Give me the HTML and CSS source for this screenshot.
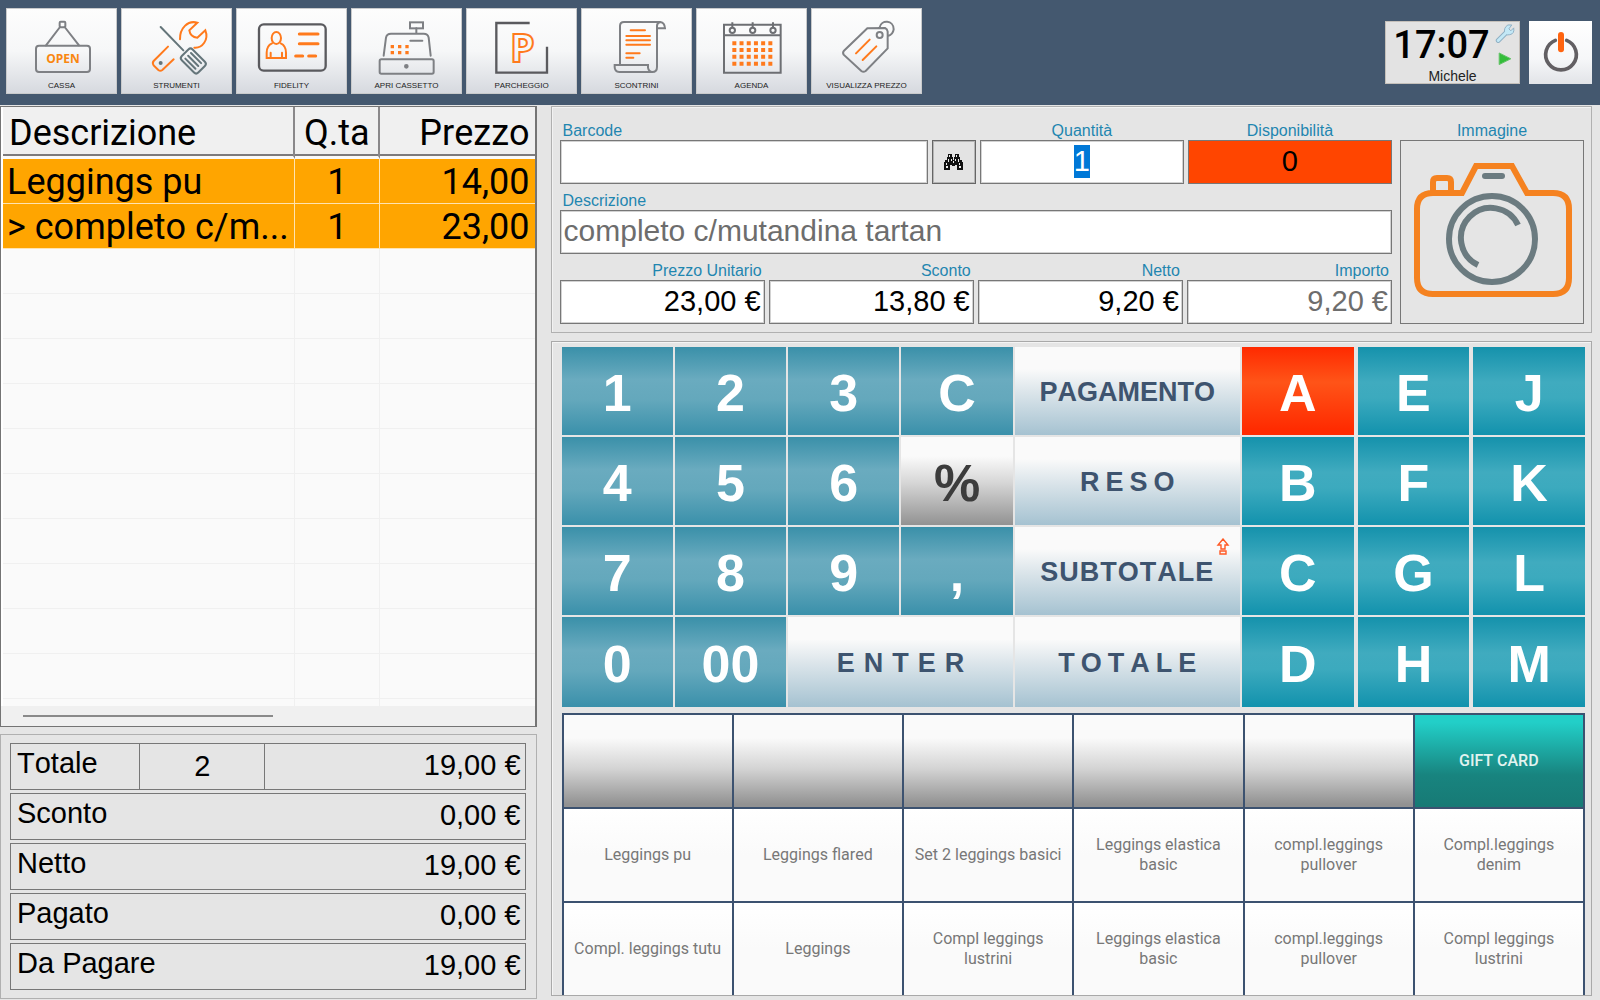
FILE: index.html
```html
<!DOCTYPE html>
<html lang="it">
<head>
<meta charset="utf-8">
<meta name="viewport" content="width=device-width, initial-scale=1">
<title>Cassa</title>
<link rel="stylesheet" href="styles.css">
</head>
<body>
<header class="topbar">
  <nav class="tools" aria-label="Funzioni">
    <button class="tool" type="button">
      <svg class="tool-icon" viewBox="0 0 333 210" aria-hidden="true">
        <g class="line"><rect x="161" y="38" width="17" height="17" rx="3"/><path d="M162 54 L120 109 M176 54 L219 109"/><rect x="90" y="110" width="162" height="79" rx="9"/></g>
        <text class="open-text" x="171" y="163">OPEN</text>
      </svg>
      <span>CASSA</span>
    </button>
    <button class="tool" type="button">
      <svg class="tool-icon" viewBox="0 0 333 210" aria-hidden="true">
        <g class="accent"><path d="M177 91 C176 58 200 33 229 41 L205 64 Q208 84 229 86 L253 64 C264 92 244 118 220 116"/><path d="M141 113 L98 156 Q93 162 98 169 L112 183 Q118 188 124 183 L158 151"/></g>
        <g class="teal"><path d="M119 54 L187 124" stroke-width="6"/><g transform="rotate(45 217 156)"><rect x="182" y="133" width="70" height="46" rx="9"/><path d="M195 144 H238 M195 156 H238 M195 168 H238"/></g><circle cx="119" cy="162" r="3"/></g>
      </svg>
      <span>STRUMENTI</span>
    </button>
    <button class="tool" type="button">
      <svg class="tool-icon" viewBox="0 0 333 210" aria-hidden="true">
        <rect class="dark" x="69" y="46" width="200" height="139" rx="14"/>
        <g class="accent"><ellipse cx="121" cy="87" rx="14" ry="18"/><path d="M108 103 Q92 110 92 131 V147 H150 V131 Q150 110 134 103 M104 147 V131 M138 147 V131"/><path stroke-width="9" d="M190 75 H246 M190 104 H246 M179 141 H200 M218 141 H239"/></g>
      </svg>
      <span>FIDELITY</span>
    </button>
    <button class="tool" type="button">
      <svg class="tool-icon" viewBox="0 0 333 210" aria-hidden="true">
        <g class="line"><rect x="177" y="40" width="39" height="18"/><path d="M196 58 V73 M98 140 L105 86 Q107 74 120 74 H218 Q231 74 233 86 L239 140 M178 95 H214"/><rect x="86" y="151" width="162" height="43" rx="5"/><circle cx="166" cy="172" r="4" fill="currentColor"/></g>
        <path class="dots" d="M119 108h10v10h-10z m22 0h10v10h-10z m22 0h10v10h-10z M119 126h10v10h-10z m22 0h10v10h-10z m22 0h10v10h-10z"/>
      </svg>
      <span>APRI CASSETTO</span>
    </button>
    <button class="tool" type="button">
      <svg class="tool-icon" viewBox="0 0 333 210" aria-hidden="true">
        <path class="dark" d="M191 42 H91 V191 H243 V113"/>
        <text class="parking-text" x="132" y="160">P</text>
      </svg>
      <span>PARCHEGGIO</span>
    </button>
    <button class="tool" type="button">
      <svg class="tool-icon" viewBox="0 0 333 210" aria-hidden="true">
        <path class="line" d="M117 167 V51 Q117 39 129 39 H238 Q251 41 252 58 H228 V51 Q228 41 238 39 M228 56 V174 Q228 189 214 189 M101 168 H201 V176 Q203 188 214 189 H115 Q101 188 101 174 Z"/>
        <path class="accent" d="M149 64 H192 M136 81 H207 M136 94 H207 M136 107 H207 M136 133 H176 M136 146 H157"/>
      </svg>
      <span>SCONTRINI</span>
    </button>
    <button class="tool" type="button">
      <svg class="tool-icon" viewBox="0 0 333 210" aria-hidden="true">
        <g class="line calendar"><path d="M84 47 H254 V191 H84 Z M84 79 H254 M109 40 V56 M170 40 V56 M231 40 V56"/><circle cx="109" cy="64" r="8"/><circle cx="170" cy="64" r="8"/><circle cx="231" cy="64" r="8"/></g>
        <path class="day-rows" d="M109 103 H229 M109 123 H229 M109 143 H229 M109 164 H229"/>
      </svg>
      <span>AGENDA</span>
    </button>
    <button class="tool" type="button">
      <svg class="tool-icon" viewBox="0 0 333 210" aria-hidden="true">
        <path class="line" d="M169 58 L222 57 Q229 60 230 68 L230 118 L164 186 Q157 191 151 186 L98 137 Q94 131 99 125 Z M206 55 C210 32 248 32 248 61 Q246 76 231 81"/>
        <circle class="line" cx="206" cy="78" r="9"/>
        <path class="accent" d="M135 133 L176 92 M155 153 L196 112"/>
      </svg>
      <span>VISUALIZZA PREZZO</span>
    </button>
  </nav>
  <div class="session">
    <div class="clock">
      <time class="clock-time">17:07</time>
      <div class="clock-icons">
        <svg width="20" height="20" viewBox="0 0 20 20" aria-hidden="true"><path d="M3 17 L11 9" stroke="#8fb0c4" stroke-width="5" stroke-linecap="round"/><path d="M10 10 Q8 4 13 1 L17 1 L14 5 L16 7 L19 4 Q20 10 15 11 Q12 12 10 10Z" fill="#c3e8f6" stroke="#8fb0c4"/><path d="M3 17 L12 8" stroke="#c3e8f6" stroke-width="3" stroke-linecap="round"/></svg>
        <svg width="14" height="14" viewBox="0 0 14 14" aria-hidden="true"><path d="M1 1 L13 7 L1 13Z" fill="#34bd3a" stroke="#63c267"/></svg>
      </div>
      <span class="clock-user">Michele</span>
    </div>
    <button class="power" type="button" aria-label="Esci">
      <svg viewBox="0 0 189 189" aria-hidden="true"><path d="M79 58 A46 46 0 1 0 113 58" fill="none" stroke="#625f63" stroke-width="11" stroke-linecap="round"/><path d="M96 42 V85" stroke="#ff6410" stroke-width="18" stroke-linecap="round"/></svg>
    </button>
  </div>
</header>

<main class="workspace">
  <div class="receipt">
    <section class="lines-panel" aria-label="Righe scontrino">
      <div class="lines-view">
        <table class="lines">
          <colgroup><col class="col-name"><col class="col-qty"><col class="col-price"></colgroup>
          <thead><tr><th scope="col">Descrizione</th><th scope="col">Q.ta</th><th scope="col">Prezzo</th></tr></thead>
          <tbody>
            <tr class="sold"><td>Leggings pu</td><td>1</td><td>14,00</td></tr>
            <tr class="sold"><td>&gt; completo c/m...</td><td>1</td><td>23,00</td></tr>
            <tr><td></td><td></td><td></td></tr>
            <tr><td></td><td></td><td></td></tr>
            <tr><td></td><td></td><td></td></tr>
            <tr><td></td><td></td><td></td></tr>
            <tr><td></td><td></td><td></td></tr>
            <tr><td></td><td></td><td></td></tr>
            <tr><td></td><td></td><td></td></tr>
            <tr><td></td><td></td><td></td></tr>
            <tr><td></td><td></td><td></td></tr>
            <tr><td></td><td></td><td></td></tr>
            <tr><td></td><td></td><td></td></tr>
          </tbody>
        </table>
      </div>
      <div class="scrollbar"><div class="scroll-thumb"></div></div>
    </section>
    <section class="totals" aria-label="Totali">
      <div class="total-row total-split"><span class="total-label">Totale</span><span class="total-count">2</span><span class="total-value">19,00 €</span></div>
      <div class="total-row"><span class="total-label">Sconto</span><span class="total-value">0,00 €</span></div>
      <div class="total-row"><span class="total-label">Netto</span><span class="total-value">19,00 €</span></div>
      <div class="total-row"><span class="total-label">Pagato</span><span class="total-value">0,00 €</span></div>
      <div class="total-row"><span class="total-label">Da Pagare</span><span class="total-value">19,00 €</span></div>
    </section>
  </div>

  <div class="register">
    <form class="item-form">
      <div class="fields">
        <div class="field-row field-row-code">
          <div class="field"><label for="barcode">Barcode</label><input id="barcode" type="text"></div>
          <button class="search" type="button" aria-label="Cerca">
            <svg width="19" height="16" viewBox="0 0 19 16" aria-hidden="true"><path fill="#111" d="M4 0h4v3h1v3h1V3h1V0h4v3h1v3h2v2h1v8h-6v-5h-2v1H8v-1H6v5H0V8h1V6h2V3h1z"/><path fill="#eee" d="M5 1h1v2H5z M12 1h1v2h-1z M4 5h1v3H4z M14 5h1v3h-1z M2 9h1v2H2z M15 9h1v2h-1z M2 12h2v2H2z M15 12h2v2h-2z M9 7h1v2H9z M7 5h1v2H7z M11 5h1v2h-1z"/></svg>
          </button>
          <div class="field centered"><label for="qty">Quantità</label><input id="qty" type="text" value="1"></div>
          <div class="field centered"><label for="stock">Disponibilità</label><input id="stock" class="out-of-stock" type="text" value="0" readonly></div>
        </div>
        <div class="field description"><label for="name">Descrizione</label><input id="name" class="muted" type="text" value="completo c/mutandina tartan" readonly></div>
        <div class="field-row field-row-prices">
          <div class="field amount"><label for="unit">Prezzo Unitario</label><input id="unit" type="text" value="23,00 €"></div>
          <div class="field amount"><label for="discount">Sconto</label><input id="discount" type="text" value="13,80 €"></div>
          <div class="field amount"><label for="net">Netto</label><input id="net" type="text" value="9,20 €"></div>
          <div class="field amount"><label for="total">Importo</label><input id="total" class="muted" type="text" value="9,20 €" readonly></div>
        </div>
      </div>
      <div class="photo">
        <span class="photo-label" id="photo-label">Immagine</span>
        <button class="photo-box" type="button" aria-labelledby="photo-label">
          <svg viewBox="0 0 182 182" aria-hidden="true">
            <g fill="none" stroke="#f58220" stroke-width="6"><path d="M29 52 H61 L75 25 H111 L126 52 H152 Q168 52 168 68 V137 Q168 153 152 153 H32 Q16 153 16 137 V68 Q16 52 32 52"/><path d="M32 52 V41 Q32 37 36 37 H46 Q50 37 50 41 V52"/></g>
            <g fill="none" stroke="#6b7b80" stroke-width="6"><circle cx="91" cy="98" r="43"/><path d="M117 84 A30 30 0 1 0 77 124"/><path d="M84 35 H101" stroke-linecap="round"/></g>
          </svg>
        </button>
      </div>
    </form>

    <section class="pad" aria-label="Tastiera">
      <div class="keypad">
        <div class="keys numbers">
          <button class="key" type="button">1</button><button class="key" type="button">2</button><button class="key" type="button">3</button><button class="key" type="button">C</button>
          <button class="key" type="button">4</button><button class="key" type="button">5</button><button class="key" type="button">6</button><button class="key key-percent" type="button">%</button>
          <button class="key" type="button">7</button><button class="key" type="button">8</button><button class="key" type="button">9</button><button class="key" type="button">,</button>
          <button class="key" type="button">0</button><button class="key" type="button">00</button><button class="key key-action key-enter" type="button">ENTER</button>
        </div>
        <div class="keys actions">
          <button class="key key-action" type="button">PAGAMENTO</button>
          <button class="key key-action spaced" type="button">RESO</button>
          <button class="key key-action key-subtotal" type="button">SUBTOTALE
            <svg class="shift" width="14" height="17" viewBox="0 0 14 17" aria-hidden="true"><path d="M7 1 L12 7 H9 V11 H5 V7 H2 Z M4 13 H10 V16 H4 Z" fill="none" stroke="#ff5a26" stroke-width="1.4"/></svg>
          </button>
          <button class="key key-action spaced" type="button">TOTALE</button>
        </div>
        <div class="keys letters">
          <button class="key key-active" type="button">A</button><button class="key" type="button">E</button><button class="key" type="button">J</button>
          <button class="key" type="button">B</button><button class="key" type="button">F</button><button class="key" type="button">K</button>
          <button class="key" type="button">C</button><button class="key" type="button">G</button><button class="key" type="button">L</button>
          <button class="key" type="button">D</button><button class="key" type="button">H</button><button class="key" type="button">M</button>
        </div>
      </div>
      <div class="products">
        <button class="product product-empty" type="button" aria-label="Vuoto"></button>
        <button class="product product-empty" type="button" aria-label="Vuoto"></button>
        <button class="product product-empty" type="button" aria-label="Vuoto"></button>
        <button class="product product-empty" type="button" aria-label="Vuoto"></button>
        <button class="product product-empty" type="button" aria-label="Vuoto"></button>
        <button class="product product-gift" type="button">GIFT CARD</button>
        <button class="product" type="button">Leggings pu</button>
        <button class="product" type="button">Leggings flared</button>
        <button class="product" type="button">Set 2 leggings basici</button>
        <button class="product" type="button">Leggings elastica basic</button>
        <button class="product" type="button">compl.leggings pullover</button>
        <button class="product" type="button">Compl.leggings denim</button>
        <button class="product" type="button">Compl. leggings tutu</button>
        <button class="product" type="button">Leggings</button>
        <button class="product" type="button">Compl leggings lustrini</button>
        <button class="product" type="button">Leggings elastica basic</button>
        <button class="product" type="button">compl.leggings pullover</button>
        <button class="product" type="button">Compl leggings lustrini</button>
      </div>
    </section>
  </div>
</main>
<script src="script.js"></script>
</body>
</html>
```
FILE: styles.css
```css
* { box-sizing: border-box; }

body {
  margin: 0;
  background: #e5e5e5;
  color: #000;
  font-family: "Liberation Sans", Arial, sans-serif;
  font-kerning: none;
}

button, input { font: inherit; font-kerning: none; color: inherit; margin: 0; border-radius: 0; }
button { border: 0; padding: 0; cursor: pointer; }

/* Top bar */
.topbar {
  display: flex;
  justify-content: space-between;
  padding: 8px 8px 11px 6px;
  background: #44586f;
}
.tools { display: flex; gap: 4px; }
.tool {
  display: flex;
  flex-direction: column;
  width: 111px;
  height: 86px;
  border: 1px solid #c9cacb;
  background: linear-gradient(#fdfdfd 0%, #f6f7f8 50%, #d6d9df 100%);
  align-items: center;
  color: #222;
  font-size: 8px;
  line-height: 14px;
}
.tool-icon { width: 111px; height: 70px; flex: none; }
.line, .accent, .dark, .teal { fill: none; stroke-width: 6; stroke-linecap: round; }
.line { stroke: #7e8084; color: #7e8084; }
.calendar { stroke: #6d6f73; stroke-linecap: butt; }
.accent { stroke: #ff7a1c; }
.dark { stroke: #5a5a5e; stroke-width: 7; stroke-linecap: butt; }
.teal { stroke: #64757a; }
.dots { fill: #ff7a1c; }
.day-rows { stroke: #ff7a1c; stroke-width: 12; stroke-dasharray: 12 9.6; }
.open-text { fill: #f98710; font: bold 36px "Open Sans", sans-serif; text-anchor: middle; }
.parking-text { fill: none; stroke: #ff7a1c; stroke-width: 6; font: bold 118px "Open Sans", sans-serif; }

.session { display: flex; align-items: flex-start; gap: 9px; padding-top: 13px; }
.clock {
  display: grid;
  grid-template: 44px 1fr / 1fr 28px;
  width: 135px;
  height: 63px;
  border: 1px solid #c5c0ba;
  background: #e3e3e3;
}
.clock-time {
  padding-left: 6px;
  font: 500 38px/46px Roboto, sans-serif;
  text-align: center;
  white-space: nowrap;
}
.clock-icons { display: flex; flex-direction: column; align-items: center; gap: 9px; padding-top: 2px; }
.clock-user { grid-column: 1 / -1; text-align: center; font-size: 14px; line-height: 20px; color: #222; }
.power { width: 63px; height: 63px; background: linear-gradient(#fff, #f6f7f9 60%, #e2e4e8); }
.power svg { display: block; width: 63px; height: 63px; }

/* Page columns */
.workspace {
  display: grid;
  grid-template-columns: minmax(0, 34fr) minmax(0, 66fr);
  gap: 14px;
  padding: 1px 8px 0 0;
}

/* Receipt lines */
.lines-panel { border: 1px solid #747474; border-right-width: 2px; background: #fff; }
.lines-view { height: 599px; padding-left: 2px; overflow: hidden; }
.lines {
  width: 100%;
  table-layout: fixed;
  border-collapse: separate;
  border-spacing: 0;
  font-family: Roboto, sans-serif;
  font-size: 36px;
  line-height: 42px;
}
.col-name { width: 55%; }
.col-qty { width: 16%; }
.col-price { width: 29%; }
.lines th {
  height: 52px;
  padding: 2px 5px 0 6px;
  border-right: 2px solid #8a888a;
  border-bottom: 3px solid #fafafa;
  box-shadow: inset 0 -2px #7d7b7d;
  background: #f0f0f0;
  font-weight: normal;
  text-align: left;
}
.lines th:last-child { border-right: 0; }
.lines td {
  height: 45px;
  padding: 2px 5px 0 4px;
  border-right: 1px solid #f0f0f0;
  border-bottom: 1px solid #f0f0f0;
  background: #fafafa;
  white-space: nowrap;
}
.lines td:last-child { border-right: 0; }
.lines .sold td { background: #ffa500; border-color: #ffe3b0; }
.lines th:nth-child(2), .lines td:nth-child(2) { padding-left: 0; padding-right: 0; text-align: center; }
.lines th:nth-child(3), .lines td:nth-child(3) { text-align: right; }
.scrollbar { height: 20px; padding: 9px 22px; background: #f0f0f0; }
.scroll-thumb { width: 51%; height: 2px; background: #8a8a8a; }

/* Totals */
.totals {
  display: grid;
  gap: 3px;
  margin-top: 7px;
  padding: 8px 10px 8px 9px;
  border: 1px solid #b0b0b0;
  font-size: 29px;
}
.total-row { display: flex; height: 47px; border: 1px solid #777; }
.total-label { flex: 1; padding-left: 6px; line-height: 38px; }
.total-value { padding-right: 4px; line-height: 42px; text-align: right; }
.total-split .total-label { flex: 125; border-right: 1px solid #777; }
.total-split .total-count { flex: 127; border-right: 1px solid #777; line-height: 44px; text-align: center; }
.total-split .total-value { flex: 261; }
.total-split > * { min-width: 0; }

/* Item form */
.item-form {
  display: flex;
  gap: 8px;
  padding: 7px 7px 8px 8px;
  border: 1px solid #b0b0b0;
  box-shadow: inset 1px 1px #f2f2f2;
}
.fields { flex: 1; min-width: 0; }
.field-row { display: grid; gap: 4px; align-items: end; }
.field-row-code { grid-template-columns: minmax(0, 368fr) 44px minmax(0, 204fr) minmax(0, 204fr); }
.field-row-prices { grid-template-columns: repeat(4, minmax(0, 1fr)); }
.field { display: flex; flex-direction: column; }
.field label, .photo-label {
  padding: 8px 3px 0;
  color: #1f86b0;
  font-size: 16px;
  line-height: 18px;
}
.field input {
  width: 100%;
  height: 44px;
  padding: 0 3px 2px;
  border: 1px solid #777;
  background: #fff;
  box-shadow: inset 0 0 0 1px #d2d2d2;
  font-size: 29px;
  outline: 0;
}
.description input { font-size: 30px; }
.field input.muted { color: #6d6d6d; }
.centered label, .centered input { text-align: center; }
.amount label, .amount input { text-align: right; }
.field input.out-of-stock { background: #ff4500; box-shadow: none; }
.field input::selection { background: #0078d7; color: #fff; }
.search { display: grid; place-items: center; height: 44px; border: 1px solid #666; background: #e3e3e3; box-shadow: inset 0 0 0 1px #b5b5b5; }
.photo { display: flex; flex-direction: column; width: 184px; text-align: center; }
.photo-box { height: 184px; border: 1px solid #777; background: #e5e5e5; }
.photo-box svg { display: block; width: 182px; height: 182px; }

/* Keypad */
.pad {
  margin-top: 8px;
  padding: 5px 6px 0 10px;
  border: 1px solid #a9a9a9;
  box-shadow: inset 1px 1px #f4f4f4;
}
.keypad {
  display: grid;
  grid-template-columns: minmax(0, 451fr) minmax(0, 225fr) minmax(0, 343fr);
  gap: 2px;
}
.keys { display: grid; grid-template-rows: repeat(3, 88px) 90px; gap: 2px; }
.numbers { grid-template-columns: repeat(4, minmax(0, 1fr)); }
.letters { grid-template-columns: repeat(3, minmax(0, 1fr)); column-gap: 4px; }
.key {
  padding-top: 3px;
  background: linear-gradient(#3a90a9, #6aabbf 37%, #64a8bc 60%, #3a90aa);
  color: #fff;
  font-size: 52px;
  font-weight: bold;
}
.letters .key { background: linear-gradient(#1592ac, #40abbf 40%, #3caabe 58%, #1292ad); }
.letters .key-active { background: linear-gradient(#ff2a00, #ff5418 40%, #ff2a00 95%); }
.key-percent { background: linear-gradient(#fafafa 22%, #d6d6d6 52%, #929292); color: #3c3c3c; }
.key-action {
  background: linear-gradient(#fafafa 25%, #dde6eb 50%, #a5c2d1);
  color: #3e546f;
  font-size: 27px;
}
.key-enter { grid-column: span 2; letter-spacing: 9px; text-indent: 9px; }
.spaced { letter-spacing: 6px; text-indent: 6px; }
.key-subtotal { position: relative; letter-spacing: 1px; }
.shift { position: absolute; top: 11px; right: 10px; }

/* Product shortcuts */
.products {
  display: grid;
  grid-template-columns: repeat(6, minmax(0, 1fr));
  grid-auto-rows: 92px;
  gap: 2px;
  margin-top: 6px;
  padding: 2px 2px 0;
  background: #3c5270;
}
.product {
  padding: 0 8px;
  background: linear-gradient(#fff, #fafafa 50%);
  color: #777;
  font-family: Roboto, sans-serif;
  font-size: 16px;
  line-height: 20px;
}
.product-empty { background: linear-gradient(#fafafa 25%, #d4d4d4 58%, #929292 97%); }
.product-gift { background: linear-gradient(#22cfc8 8%, #18847f 65%, #177a75); color: #e2f3f0; font-weight: 500; }
```
FILE: script.js
```js
// The quantity is ready to be overwritten as soon as the till opens.
const quantity = document.getElementById("qty");
quantity.focus();
quantity.select();
```
